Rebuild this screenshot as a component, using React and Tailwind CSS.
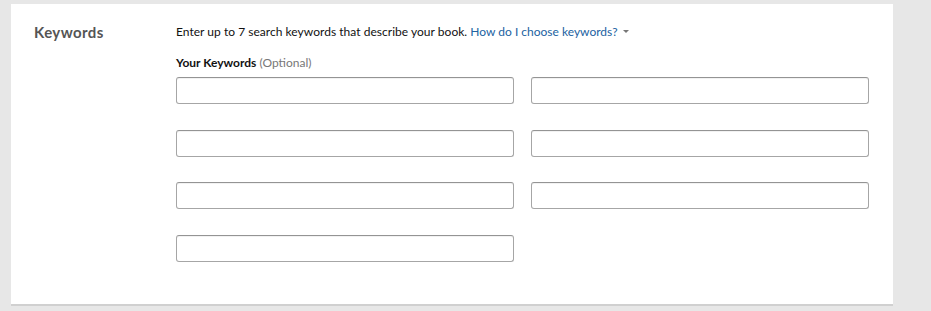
export default function App() {
  const rows = [
    [0, 1],
    [2, 3],
    [4, 5],
    [6],
  ];
  return (
    <div className="w-[931px] h-[311px] bg-[#e7e7e7] pt-[4px] pl-[11px] overflow-hidden" style={{ fontFamily: 'Lato, "Open Sans", sans-serif' }}>
      <div className="w-[882px] h-[302px] bg-white border-b-2 border-[#d0d0d0] flex">
        <div className="w-[165px] pl-[23px] pt-[17px]">
          <h2 className="text-[15px] font-bold text-[#555] leading-[22px] tracking-[0.4px]">Keywords</h2>
        </div>
        <div className="pt-[18px]">
          <p className="text-[12px] text-[#111] leading-[20px] tracking-[0.03px]">
            Enter up to 7 search keywords that describe your book.{" "}
            <span className="text-[#2162a1] tracking-normal">How do I choose keywords?</span>
            <span className="inline-block ml-[5px] align-middle border-l-[3px] border-r-[3px] border-t-[3px] border-l-transparent border-r-transparent border-t-[#777] mb-[3px]"></span>
          </p>
          <p className="mt-[12px] text-[12px] leading-[18px] text-[#111]">
            <span className="font-bold">Your Keywords</span>{" "}
            <span className="text-[#777]">(Optional)</span>
          </p>
          <div className="mt-[5px] flex flex-col gap-[25.6px]">
            {rows.map((r, i) => (
              <div key={i} className="flex gap-[17px]">
                {r.map((k) => (
                  <input
                    key={k}
                    type="text"
                    className="w-[338px] h-[27px] border border-[#a6a6a6] border-t-[#949494] rounded-[3px] bg-white shadow-[inset_0_1px_0_rgba(0,0,0,0.05)] outline-none px-[7px] text-[13px]"
                  />
                ))}
              </div>
            ))}
          </div>
        </div>
      </div>
    </div>
  );
}
